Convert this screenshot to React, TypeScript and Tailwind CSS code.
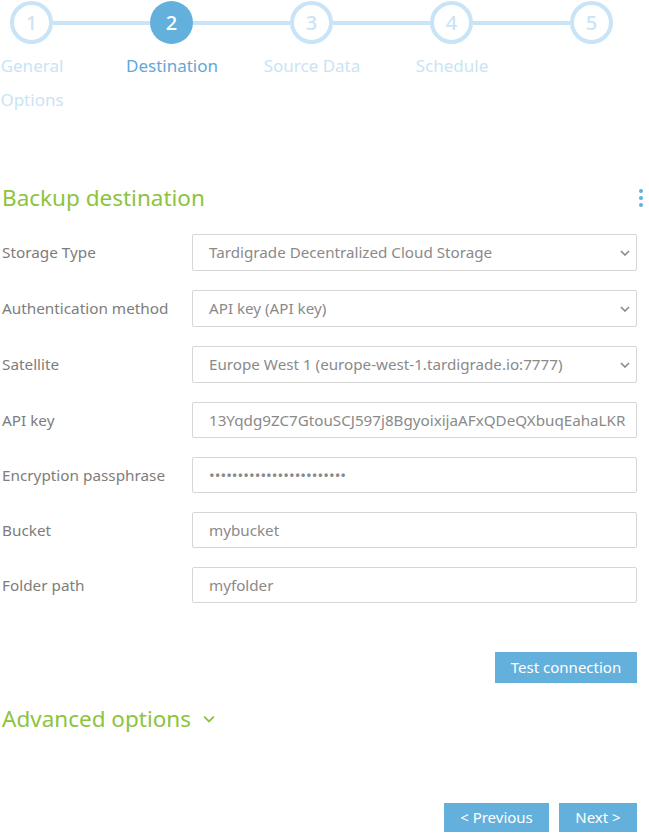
import React from "react";

const steps = [
  { n: 1, label: "General Options" },
  { n: 2, label: "Destination" },
  { n: 3, label: "Source Data" },
  { n: 4, label: "Schedule" },
  { n: 5, label: "" },
];

const Chevron = ({ className }: { className?: string }) => (
  <svg viewBox="0 0 10 6" className={className} fill="none" stroke="currentColor" strokeWidth="1.6">
    <path d="M1 1l4 4 4-4" />
  </svg>
);

const fields = [
  { label: "Storage Type", value: "Tardigrade Decentralized Cloud Storage", select: true },
  { label: "Authentication method", value: "API key (API key)", select: true },
  { label: "Satellite", value: "Europe West 1 (europe-west-1.tardigrade.io:7777)", select: true },
  { label: "API key", value: "13Yqdg9ZC7GtouSCJ597j8BgyoixijaAFxQDeQXbuqEahaLKR", select: false },
  { label: "Encryption passphrase", value: "••••••••••••••••••••••••", select: false },
  { label: "Bucket", value: "mybucket", select: false },
  { label: "Folder path", value: "myfolder", select: false },
];

export default function App() {
  return (
    <div className="w-[649px] h-[839px] bg-white overflow-hidden text-[#808080]" style={{ fontFamily: '"Noto Sans", sans-serif' }}>
      {/* stepper */}
      <div className="flex items-center pl-[10px] pt-[1px]">
        {steps.map((s, i) => (
          <React.Fragment key={s.n}>
            {i > 0 && <div className="w-[97px] h-[4px] bg-[#c9e4f6] shrink-0" />}
            {s.n === 2 ? (
              <div className="w-[43px] h-[43px] shrink-0 rounded-full bg-[#63b0dd] flex items-center justify-center text-white text-[20px] font-medium">
                {s.n}
              </div>
            ) : (
              <div className="w-[43px] h-[43px] shrink-0 rounded-full border-[4px] border-[#c9e4f6] flex items-center justify-center text-[#c9e4f6] text-[20px] font-medium">
                {s.n}
              </div>
            )}
          </React.Fragment>
        ))}
      </div>
      <div className="flex ml-[-38px] mt-[5px]">
        {steps.map((s) => (
          <div key={s.n} className="w-[140px] shrink-0 flex justify-center">
            <div className={`w-[112px] text-center text-[17px] leading-[34px] ${s.n === 2 ? "text-[#62a7d6]" : "text-[#c9e4f6]"}`}>
              {s.label}
            </div>
          </div>
        ))}
      </div>

      {/* backup destination */}
      <div className="pl-[2px] pr-[12px] mt-[67px]">
        <div className="flex items-center justify-between h-[28px]">
          <h2 className="text-[22.5px] text-[#8cc43e] leading-[28px]">Backup destination</h2>
          <div className="flex flex-col gap-[3px] mr-[-6px]">
            <span className="w-[4px] h-[4px] rounded-full bg-[#63b0dd]" />
            <span className="w-[4px] h-[4px] rounded-full bg-[#63b0dd]" />
            <span className="w-[4px] h-[4px] rounded-full bg-[#63b0dd]" />
          </div>
        </div>

        <div className="mt-[22px] flex flex-col gap-[19px]">
          {fields.map((f) => (
            <div key={f.label} className="flex items-center">
              <div className="w-[190px] text-[15.3px] text-[#7d7d7d]">{f.label}</div>
              <div
                className={`flex-1 ${f.select ? "h-[37px]" : "h-[36px]"} border border-[#d6d6d6] rounded-[2px] flex items-center pl-[16px] pr-[6px] text-[15.2px] text-[#8a8a8a] whitespace-nowrap overflow-hidden`}
              >
                <span className="flex-1">{f.value}</span>
                {f.select && <Chevron className="w-[10px] h-[6px] text-[#888]" />}
              </div>
            </div>
          ))}
        </div>

        <div className="flex justify-end mt-[49px]">
          <button className="h-[31px] w-[142px] bg-[#63b0dd] text-white text-[15px]">Test connection</button>
        </div>

        <div className="mt-[21px] flex items-center gap-[12px] text-[#8cc43e]">
          <span className="text-[22.5px] leading-[30px]">Advanced options</span>
          <Chevron className="w-[12px] h-[8px]" />
        </div>

        <div className="flex justify-end gap-[10px] mt-[69px]">
          <button className="h-[29px] w-[105px] bg-[#63b0dd] text-white text-[15px]">&lt; Previous</button>
          <button className="h-[29px] w-[78px] bg-[#63b0dd] text-white text-[15px]">Next &gt;</button>
        </div>
      </div>
    </div>
  );
}
